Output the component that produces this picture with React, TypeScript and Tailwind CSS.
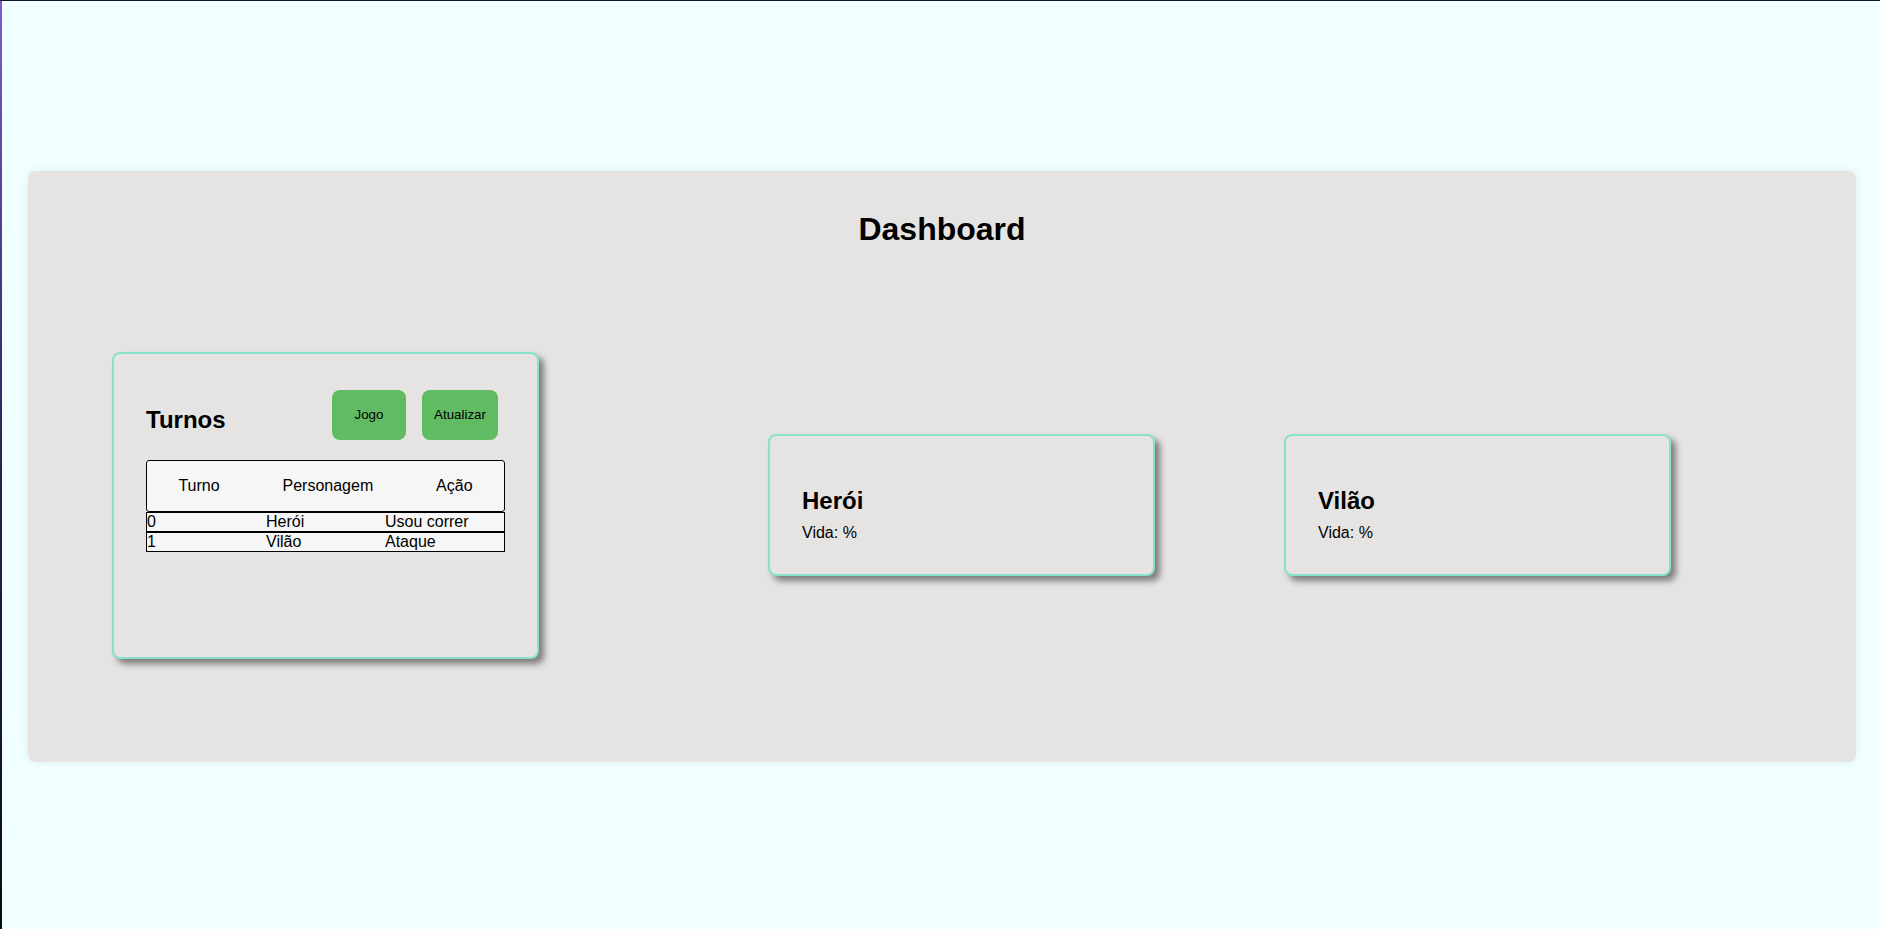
import React from "react";

const turnos = [
    { turno: 0, personagem: "Herói", acao: "Usou correr" },
    { turno: 1, personagem: "Vilão", acao: "Ataque" },
];

const StatusCard = ({ nome, className }: { nome: string; className: string }) => (
    <div className={`w-[387px] rounded-lg border-2 border-[#86e2cc] bg-[#e6e4e2] p-8 shadow-[5px_5px_6px_rgba(0,0,0,0.45)] ${className}`}>
        <h2 className="mt-[19px] text-2xl font-bold leading-[28px]">{nome}</h2>
        <p className="mt-[9px] text-base leading-[18px]">Vida: %</p>
    </div>
);

const App = () => {
    return (
        <div className="flex h-[929px] w-full border-t border-[#14142a] bg-[#f0ffff] text-black" style={{ fontFamily: '"Liberation Sans", Arial, sans-serif' }}>
            <div className="w-[2px] bg-gradient-to-b from-[#7a5cd6] via-[#2a2250] to-[#0b0b16]"></div>
            <div className="flex-1 pt-[170px] pl-[26px] pr-[24px]">
                <div className="flex h-[591px] flex-col rounded-lg bg-[#e6e4e2] shadow-[0_0_8px_rgba(0,0,0,0.08)]">
                    <h1 className="pt-[40px] text-center text-[32px] font-bold leading-[37px]">Dashboard</h1>
                    <div className="flex flex-1 items-center">
                        <div className="ml-[84px] w-[427px] rounded-lg border-2 border-[#86e2cc] bg-[#e6e4e2] p-8 shadow-[5px_5px_6px_rgba(0,0,0,0.45)]">
                            <div className="flex h-[74px] items-start justify-between">
                                <h2 className="mt-[20px] text-2xl font-bold leading-[28px]">Turnos</h2>
                                <div className="mt-1 mr-[7px] flex gap-4">
                                    <button className="h-[50px] w-[74px] rounded-lg bg-[#60bb63] text-[13.33px]">Jogo</button>
                                    <button className="h-[50px] w-[76px] rounded-lg bg-[#60bb63] text-[13.33px]">Atualizar</button>
                                </div>
                            </div>
                            <div className="bg-[#f6f6f6]">
                                <div className="flex justify-around rounded-[3px] border border-black py-4 text-base leading-[18px]">
                                    <span>Turno</span>
                                    <span>Personagem</span>
                                    <span>Ação</span>
                                </div>
                                {turnos.map((t) => (
                                    <div key={t.turno} className="grid grid-cols-3 border border-black text-base leading-[18px]">
                                        <span>{t.turno}</span>
                                        <span>{t.personagem}</span>
                                        <span>{t.acao}</span>
                                    </div>
                                ))}
                            </div>
                            <div className="h-[73px]"></div>
                        </div>
                        <StatusCard nome="Herói" className="ml-[229px]" />
                        <StatusCard nome="Vilão" className="ml-[129px] w-[386px]" />
                    </div>
                </div>
            </div>
        </div>
    );
};

export default App;
